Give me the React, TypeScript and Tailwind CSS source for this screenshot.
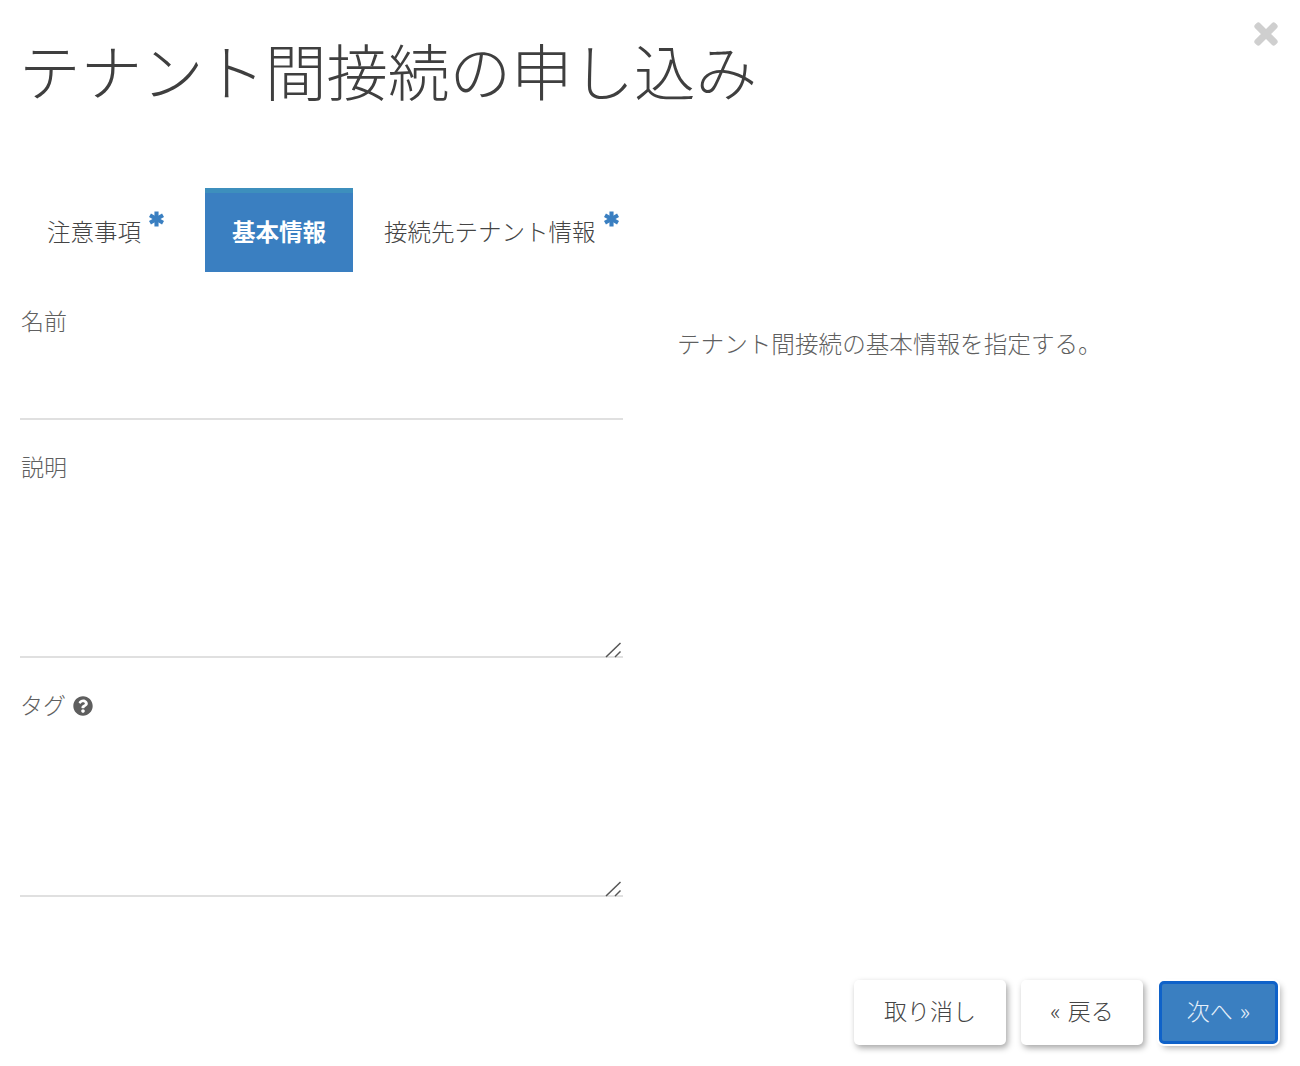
import React from 'react';
import { FaQuestionCircle, FaTimes } from 'react-icons/fa';

const font = "font-['Noto_Sans_CJK_JP','Noto_Sans',sans-serif]";

const Asterisk = () => (
  <svg viewBox="0 0 16 16" className="absolute right-[-23px] top-[-3px] w-[15px] h-[16px] text-[#3a7fc1]">
    <g stroke="currentColor" strokeWidth="4.4">
      <line x1="8" y1="0" x2="8" y2="16" />
      <line x1="1" y1="4" x2="15" y2="12" />
      <line x1="1" y1="12" x2="15" y2="4" />
    </g>
  </svg>
);

const Tab = ({ label, active, required }: { label: string; active?: boolean; required?: boolean }) => (
  <div
    className={
      active
        ? 'h-[84px] w-[148px] pb-[2px] flex items-center justify-center bg-[#3a7fc1] border-t-[5px] border-[#3d8fbd] text-white font-bold text-[23.5px]'
        : 'h-[84px] pt-[4px] pl-[31px] pr-[29px] flex items-center text-[#444] font-light text-[23.5px]'
    }
  >
    <span className="relative">
      {label}
      {required && <Asterisk />}
    </span>
  </div>
);

const ResizeHandle = () => (
  <svg viewBox="0 0 18 16" className="absolute right-0 bottom-0 w-[18px] h-[16px] text-[#555]">
    <g stroke="currentColor" strokeWidth="1.5">
      <line x1="1" y1="15" x2="15.5" y2="1" />
      <line x1="10" y1="15" x2="15.5" y2="9.5" />
    </g>
  </svg>
);

const Field = ({ label, children }: { label: React.ReactNode; children: React.ReactNode }) => (
  <div className="flex flex-col">
    <label className="h-[34px] pb-[2px] pl-[1px] flex items-center gap-2 text-[23px] font-light text-[#606060]">{label}</label>
    {children}
  </div>
);

const TextArea = () => (
  <div className="relative">
    <textarea className="block w-full h-[174px] border-b-2 border-[#e0e0e0] outline-none resize-none" />
    <ResizeHandle />
  </div>
);

const Button = ({ children, className }: { children: React.ReactNode; className: string }) => (
  <button className={`pb-[5px] text-[23px] font-light [word-spacing:2px] ${className}`}>{children}</button>
);

export default function App() {
  return (
    <div className={`${font} antialiased relative w-[1300px] h-[1066px] bg-white overflow-hidden px-5`}>
      <FaTimes className="absolute right-[20px] top-[18px] w-[28px] h-[32px] text-[#cfcfcf] stroke-[20px]" />

      <h1 className="pt-[25px] ml-[-1px] h-[188px] text-[61.5px] leading-[90px] font-light text-[#3f3f3f]">
        テナント間接続の申し込み
      </h1>

      <div className="flex h-[84px] ml-[-4px]">
        <Tab label="注意事項" required />
        <div className="w-[35px]" />
        <Tab label="基本情報" active />
        <Tab label="接続先テナント情報" required />
      </div>

      <div className="flex gap-[54px] pt-[32px]">
        <div className="w-[603px] flex flex-col">
          <Field label="名前">
            <input className="h-[82px] border-b-2 border-[#e0e0e0] outline-none" />
          </Field>
          <div className="h-[30px]" />
          <Field label="説明">
            <TextArea />
          </Field>
          <div className="h-[31px]" />
          <Field
            label={
              <>
                <span className="ml-[-1px] mt-[-1px]">タグ</span>
                <FaQuestionCircle className="w-[20px] h-[20px] text-[#5e5e5e] ml-[-1px] mt-[2px]" />
              </>
            }
          >
            <TextArea />
          </Field>
        </div>
        <p className="pt-[22px] text-[23.6px] font-light text-[#5f5f5f]">テナント間接続の基本情報を指定する。</p>
      </div>

      <div className="absolute left-[854px] top-[980px] flex items-center">
        <Button className="h-[65px] w-[152px] rounded-[5px] bg-white text-[#444] shadow-[2px_3px_6px_rgba(0,0,0,0.35)]">取り消し</Button>
        <Button className="h-[65px] ml-[15px] w-[122px] rounded-[5px] bg-white text-[#444] shadow-[2px_3px_6px_rgba(0,0,0,0.35)]">« 戻る</Button>
        <Button className="h-[63px] ml-[16px] w-[119px] rounded-[5px] bg-[#3a7fc1] border-[3px] border-[#0f62c9] ring-2 ring-white text-[#e6f0fa] shadow-[3px_4px_6px_rgba(0,0,0,0.3)]">次へ »</Button>
      </div>
    </div>
  );
}
